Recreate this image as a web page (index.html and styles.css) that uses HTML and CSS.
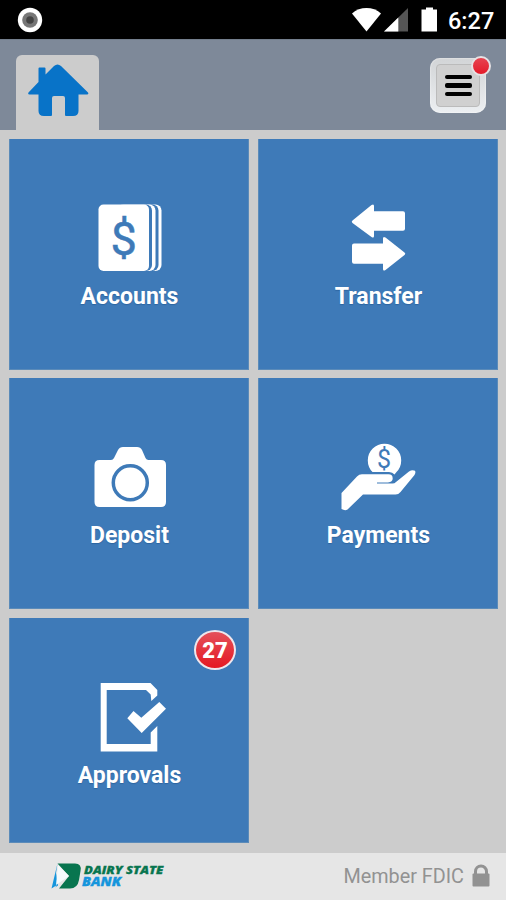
FILE: index.html
```html
<!DOCTYPE html>
<html lang="en">
<head>
    <meta charset="UTF-8">
    <meta name="viewport" content="width=device-width, initial-scale=1.0">
    <title>Dairy State Bank</title>
    <link rel="stylesheet" href="styles.css">
</head>
<body>
    <div class="status-bar">
        <svg class="status-dot" width="26" height="26" viewBox="0 0 26 26">
            <circle cx="13" cy="13" r="12.2" fill="#fff"/>
            <circle cx="13" cy="13" r="7.8" fill="#777"/>
            <circle cx="13" cy="13" r="3.8" fill="#444"/>
        </svg>
        <div class="status-right">
            <!-- wifi, signal, battery -->
            <svg width="86" height="26" viewBox="0 0 86 26">
                <path d="M0 6.5C8-.8 21-.8 29 6.5L14.500 24.500Z" fill="#fff"/>
                <path d="M32 24.500L56 1v23.500Z" fill="#555"/>
                <path d="M32 24.500L46.300 10.500v14Z" fill="#fff"/>
                <path d="M74 .5h7v2h4v22H69.500v-22H74Z" fill="#fff"/>
            </svg>
            <span class="clock">6:27</span>
        </div>
    </div>

    <header>
        <a class="home-tab" href="#" aria-label="Home">
            <svg width="62" height="54" viewBox="0 0 62 54">
                <path d="M1.500 28.500L11.500 18V4.500q0-1 1-1h5q1 0 1 1V10.500L27 2q3.500-3 7 0L61 28.500q1 2-1 2H51.500V47q0 5-5.500 5H39q-1 0-1-1V34q0-2-2-2H27q-2 0-2 2V51q0 1-1 1H17q-5.500 0-5.500-5V30.500H2.500q-2 0-1-2Z" fill="#0873c8"/>
            </svg>
        </a>
        <button class="menu-button" aria-label="Menu">
            <span class="menu-face"><i></i><i></i><i></i></span>
            <span class="menu-dot"></span>
        </button>
    </header>

    <main>
        <a class="tile" href="#">
            <svg viewBox="0 0 80 72">
                <rect x="30" y="2.500" width="42.500" height="66.500" rx="6"/>
                <rect x="30" y="2.500" width="39.500" height="66.500" rx="6" class="cut"/>
                <rect x="28" y="2.500" width="38.500" height="66.500" rx="6"/>
                <rect x="28" y="2.500" width="35" height="66.500" rx="6" class="cut"/>
                <rect x="9.500" y="2.500" width="50.500" height="66.500" rx="5"/>
                <text x="34.800" y="52.500" font-size="47" stroke="#3e7ab8" stroke-width=".5">$</text>
            </svg>
            <span>Accounts</span>
        </a>
        <a class="tile" href="#">
            <svg viewBox="0 0 80 72">
                <path d="M14.500 18.500L33.500 3q2.500-1.500 2.500 1V9.300H65q2 0 2 2V26.700q0 2-2 2H36V34q0 2.500-2.500 1L14.500 21q-1.500-1.200 0-2.500Z"/>
                <path d="M66.500 50.500L47.500 35.500q-2.500-1.500-2.500 1V41.500H16q-2 0-2 2V59.700q0 2 2 2H45V67q0 2.500 2.500 1L66.500 53q1.500-1.200 0-2.500Z"/>
            </svg>
            <span>Transfer</span>
        </a>
        <a class="tile" href="#">
            <svg viewBox="0 0 80 72">
                <path d="M10.500 19H22q2 0 3-2L29 9q1.500-3 5-3H48q3.500 0 5 3L56.500 17q1 2 3 2H72q5 0 5 5V61q0 5-5 5H10.500q-5 0-5-5V24q0-5 5-5Z"/>
                <circle cx="41.300" cy="41.800" r="17" class="ring"/>
            </svg>
            <span>Deposit</span>
        </a>
        <a class="tile" href="#">
            <svg viewBox="0 0 80 72">
                <path d="M34.500 31A16.700 16.700 0 1 1 58.500 31L56.500 33.500Q54.500 31 51 31Z"/>
                <text x="46" y="27" font-size="25">$</text>
                <path d="M3.500 52L19 35.500Q21 33.300 24 33.300H50.500Q54.700 33.300 54.700 37.500Q54.700 41 50 41.500H39V42.500H54.500Q56.500 42.500 58 41L71 30.500Q74 28.500 77 29.700Q78 31.500 76.500 34L62.500 51Q60.500 53.500 57.500 53.500H25L9.500 68.500Q7 70 3.500 68Z"/>
            </svg>
            <span>Payments</span>
        </a>
        <a class="tile" href="#">
            <svg viewBox="0 0 80 72">
                <path d="M11.700 2H61.500L68.300 9V14.500L62.300 20L61.700 13.500L57 9H17.700V63H61.700V51.500L68.300 45V70.500H11.700Z"/>
                <path d="M38.300 37.300L44.500 30L52.300 36.700L70.300 21L77 27.700L52.700 52Z"/>
            </svg>
            <span>Approvals</span>
            <b class="badge">27</b>
        </a>
    </main>

    <footer>
        <div class="logo">
            <svg width="31" height="26" viewBox="0 0 31 26">
                <path d="M6.500.5H24Q31 .5 29.500 8L28 17Q26.500 25.500 19 25.500H8L18 13Z" fill="#08754f"/>
                <path d="M6.500.5L.5 25.500L6 22L4 24.500L7 22.500L5 10Z" fill="#1595dc"/>
                <path d="M7 2L18 13L5 22Z" fill="#f5fafc"/>
            </svg>
            <div class="logo-text">
                <span class="green">DAIRY STATE</span>
                <span class="blue">BANK</span>
            </div>
        </div>
        <div class="member">
            <span>Member FDIC</span>
            <svg width="18" height="23" viewBox="0 0 18 23">
                <path d="M3.500 11V7.500a5.500 5.500 0 0 1 11 0V11" fill="none" stroke="#929292" stroke-width="3"/>
                <rect x=".5" y="9.500" width="17" height="13" rx="1" fill="#929292"/>
            </svg>
        </div>
    </footer>
</body>
</html>
```
FILE: styles.css
```css
* {
    box-sizing: border-box;
}
body {
    margin: 0;
    height: 900px;
    display: flex;
    flex-direction: column;
    background: #ccc;
    font-family: Roboto, sans-serif;
    overflow: hidden;
}
.status-bar {
    height: 39px;
    background: #000;
    display: flex;
    justify-content: space-between;
    padding: 7px 12px 0 17px;
}
.status-right {
    display: flex;
    gap: 10px;
}
.clock {
    width: 46px;
    color: #fff;
    font-size: 23.5px;
    font-weight: 500;
    line-height: 28px;
}
header {
    height: 91px;
    background: #7e8999;
    border-top: 1px solid #737e8c;
    display: flex;
    justify-content: space-between;
    padding: 15px 20px 0 16px;
}
.home-tab {
    width: 83px;
    height: 75px;
    background: #ccc;
    border-radius: 6px 6px 0 0;
    padding: 9px 0 0 11px;
}
.menu-button {
    position: relative;
    width: 56px;
    height: 55px;
    margin-top: 3px;
    padding: 6px;
    border: 0;
    border-radius: 10px;
    background: linear-gradient(#d2d4d6, #eceff2);
    box-shadow: inset 0 0 2px #fff;
}
.menu-face {
    display: flex;
    flex-direction: column;
    align-items: center;
    justify-content: center;
    gap: 4px;
    height: 43px;
    border: 1px solid #bbb;
    border-radius: 4px;
    background: #d0d0d0;
}
.menu-face i {
    width: 27px;
    height: 4.5px;
    border-radius: 2px;
    background: #000;
}
.menu-dot {
    position: absolute;
    top: -2px;
    right: -5px;
    width: 20px;
    height: 20px;
    border: 2px solid #e6e2e4;
    border-radius: 50%;
    background: linear-gradient(#e74450, #e51b2a);
}
main {
    height: 723px;
    padding: 9px 8px 10px 9px;
    display: grid;
    grid-template-columns: 240px 240px;
    grid-template-rows: 231px 231px 225px;
    gap: 8.4px 9px;
}
.tile {
    position: relative;
    display: flex;
    flex-direction: column;
    align-items: center;
    padding-top: 63px;
    background: #3e7ab8;
    border: 1px solid #5b8bb9;
    border-width: 0 1px 1px;
    color: #fff;
    font-size: 23px;
    font-weight: 700;
    line-height: 30px;
    text-decoration: none;
    text-shadow: 0 1px 1px #2d65a0;
}
.tile svg {
    width: 80px;
    height: 72px;
    margin-bottom: 8px;
    fill: #fff;
}
.tile span {
    padding-left: 1px;
}
.tile .cut {
    fill: #3e7ab8;
}
.tile .ring {
    fill: none;
    stroke: #3e7ab8;
    stroke-width: 3.5;
}
.tile text {
    fill: #3e7ab8;
    font-weight: 400;
    text-anchor: middle;
    text-shadow: none;
}
.badge {
    position: absolute;
    top: 12px;
    right: 12px;
    width: 42px;
    height: 40px;
    border: 2px solid #eee6ec;
    border-radius: 50%;
    background: linear-gradient(#e4505a, #e51822);
    font-size: 22px;
    line-height: 37px;
    text-align: center;
    text-shadow: none;
}
footer {
    height: 47px;
    background: #e6e6e6;
    display: flex;
    justify-content: space-between;
    padding: 0 16px 0 51px;
}
.logo {
    display: flex;
    gap: 2px;
    padding-top: 10px;
}
.logo-text {
    display: flex;
    flex-direction: column;
    align-items: flex-start;
    padding-top: 1px;
    font-family: "Open Sans", sans-serif;
    font-size: 11px;
    font-style: italic;
    font-weight: 800;
    line-height: 12px;
    white-space: nowrap;
    -webkit-text-stroke: 0.3px;
}
.logo-text span {
    transform: scaleX(1.18);
    transform-origin: left;
}
.green {
    color: #08754f;
}
.blue {
    color: #1595dc;
    margin-left: -2px;
    font-size: 12px;
}
.member {
    display: flex;
    gap: 8px;
    padding-top: 11px;
    color: #929292;
    font-size: 19.8px;
    line-height: 26px;
}
```
